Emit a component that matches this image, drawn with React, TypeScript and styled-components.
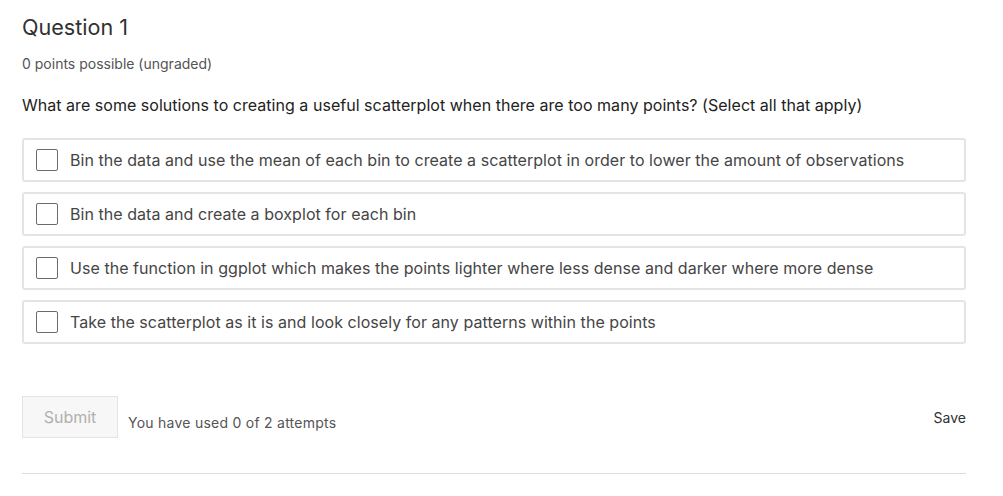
import styled, { createGlobalStyle } from 'styled-components';

const GlobalStyle = createGlobalStyle`
  body {
    margin: 0;
    background: #fff;
    font-family: Inter, "Open Sans", sans-serif;
  }
`;

const options = [
  'Bin the data and use the mean of each bin to create a scatterplot in order to lower the amount of observations',
  'Bin the data and create a boxplot for each bin',
  'Use the function in ggplot which makes the points lighter where less dense and darker where more dense',
  'Take the scatterplot as it is and look closely for any patterns within the points',
];

export default function App() {
  return (
    <>
      <GlobalStyle />
      <Problem>
        <Title>Question 1</Title>
        <Points>0 points possible (ungraded)</Points>
        <Prompt>
          What are some solutions to creating a useful scatterplot when there
          are too many points? (Select all that apply)
        </Prompt>
        <OptionList>
          {options.map((text) => (
            <Option key={text}>
              <Box type="checkbox" />
              <OptionText>{text}</OptionText>
            </Option>
          ))}
        </OptionList>
        <Actions>
          <SubmitGroup>
            <SubmitButton disabled>Submit</SubmitButton>
            <Attempts>You have used 0 of 2 attempts</Attempts>
          </SubmitGroup>
          <SaveButton>Save</SaveButton>
        </Actions>
        <Divider />
      </Problem>
    </>
  );
}

const Problem = styled.div`
  width: 944px;
  padding: 12px 0 0 22px;
`;

const Title = styled.h3`
  margin: 0;
  font-size: 21.6px;
  font-weight: 400;
  line-height: 30px;
  color: #313131;
`;

const Points = styled.div`
  margin-top: 13px;
  font-size: 14px;
  line-height: 18px;
  color: #545454;
`;

const Prompt = styled.p`
  margin: 22px 0 0;
  font-size: 16px;
  line-height: 20px;
  letter-spacing: 0.03px;
  color: #222;
`;

const OptionList = styled.div`
  display: flex;
  flex-direction: column;
  gap: 10px;
  margin-top: 23px;
`;

const Option = styled.label`
  display: flex;
  align-items: center;
  gap: 12px;
  height: 44px;
  box-sizing: border-box;
  padding: 0 12px;
  border: 2px solid #e4e4e4;
  border-radius: 3px;
`;

const Box = styled.input`
  appearance: none;
  margin: 0;
  width: 22px;
  height: 22px;
  box-sizing: border-box;
  border: 1px solid #6b6b6b;
  border-radius: 2px;
  background: #fff;
  flex-shrink: 0;
`;

const OptionText = styled.span`
  font-size: 16px;
  letter-spacing: 0.05px;
  color: #454545;
`;

const Actions = styled.div`
  display: flex;
  justify-content: space-between;
  align-items: flex-start;
  margin-top: 52px;
`;

const SubmitGroup = styled.div`
  display: flex;
  align-items: center;
  gap: 10px;
`;

const SubmitButton = styled.button`
  width: 96px;
  height: 42px;
  border: 1px solid #e4e4e4;
  background: #f7f7f7;
  color: #b0b0b0;
  font-family: inherit;
  font-size: 16px;
  border-radius: 0;
  padding: 0;
`;

const Attempts = styled.span`
  margin-top: 10px;
  font-size: 14px;
  letter-spacing: 0.25px;
  color: #555;
`;

const SaveButton = styled.button`
  margin-top: 13px;
  border: none;
  background: none;
  padding: 0;
  font-family: inherit;
  font-size: 14px;
  color: #313131;
`;

const Divider = styled.hr`
  margin: 35px 0 0;
  border: none;
  border-top: 1px solid #ddd;
`;
